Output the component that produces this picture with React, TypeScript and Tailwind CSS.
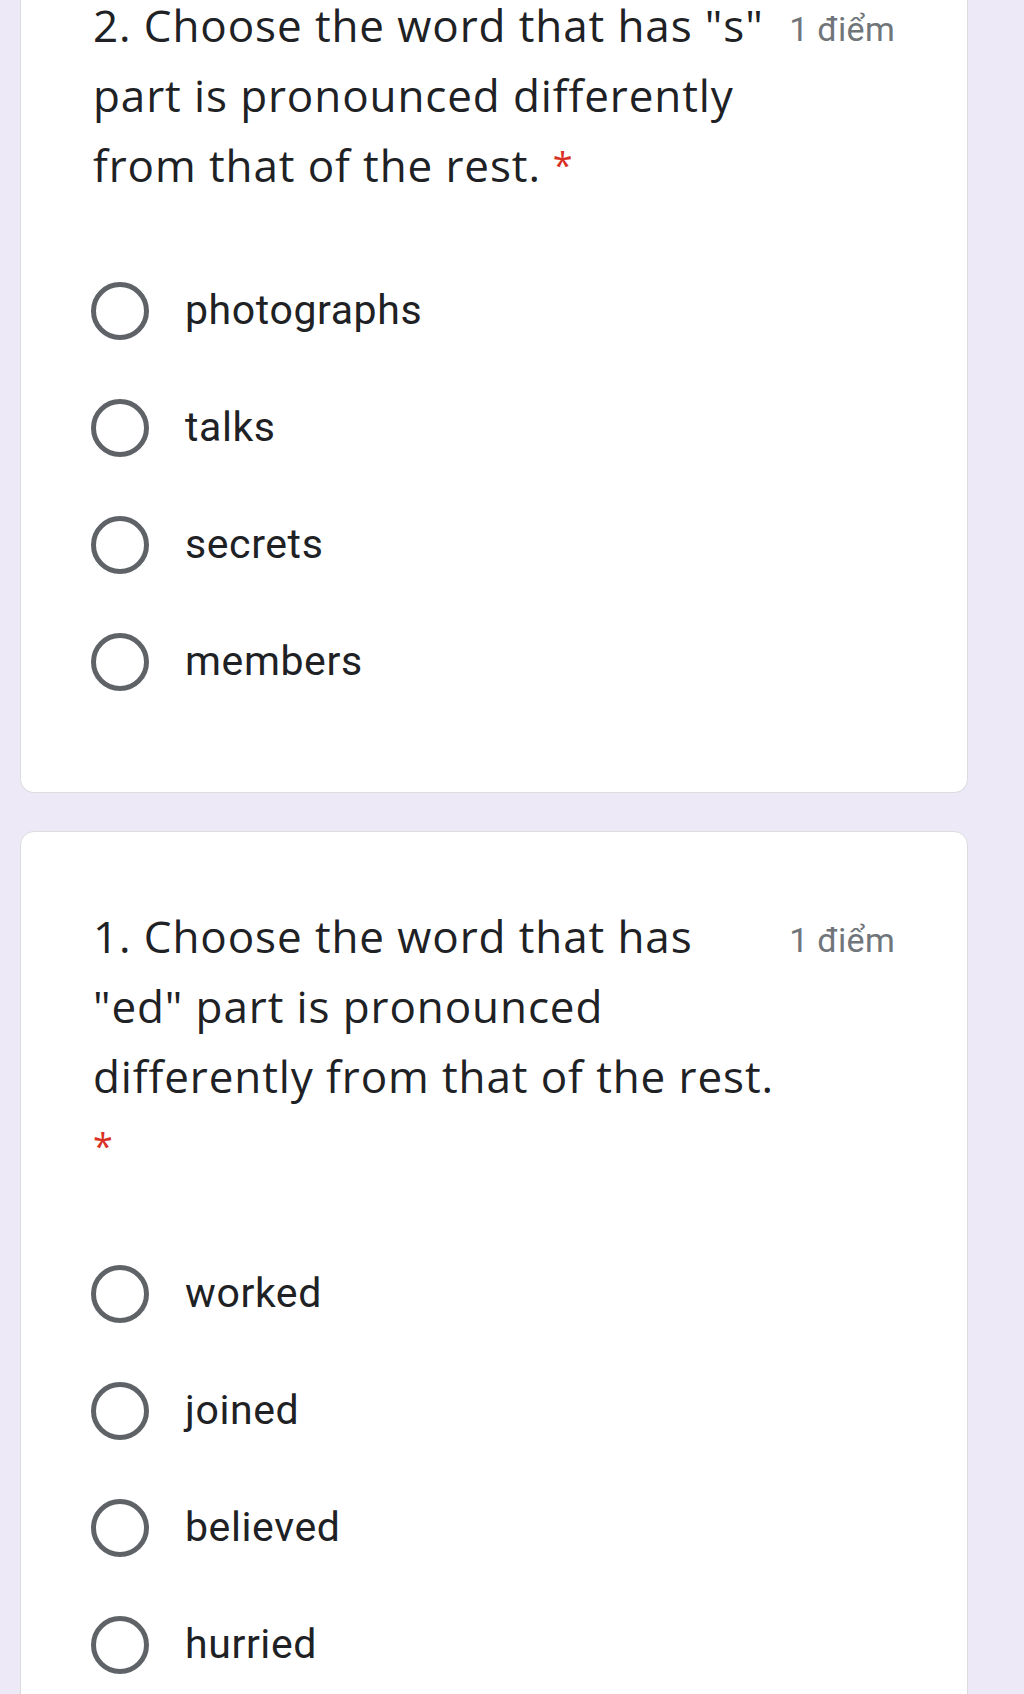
import React from "react";

type Question = {
  lines: string[];
  starInline: boolean;
  options: string[];
};

const questions: Question[] = [
  {
    lines: ['2. Choose the word that has "s"', "part is pronounced differently", "from that of the rest."],
    starInline: true,
    options: ["photographs", "talks", "secrets", "members"],
  },
  {
    lines: ["1. Choose the word that has", '"ed" part is pronounced', "differently from that of the rest."],
    starInline: false,
    options: ["worked", "joined", "believed", "hurried"],
  },
];

function Radio() {
  return <span className="block h-[58px] w-[58px] shrink-0 rounded-full border-[5px] border-[#5f6368]" />;
}

function QuestionCard({ q, className }: { q: Question; className?: string }) {
  const last = q.lines.length - 1;
  return (
    <div className={`rounded-[14px] border border-[#dadce0] bg-white px-[72px] pt-[69px] pb-[72px] ${className ?? ""}`}>
      <div className="flex items-start">
        <div className="flex-1 font-['Open_Sans',sans-serif] text-[44px] leading-[70px] tracking-[0.9px] text-[#202124]">
          {q.lines.map((line, i) => (
            <div key={i} className="h-[70px]">
              {line}
              {q.starInline && i === last && (
                <span className="relative -top-[4px] ml-[12px] text-[36px] leading-[0] text-[#d93025]">*</span>
              )}
            </div>
          ))}
          {!q.starInline && <div className="h-[72px] text-[36px] text-[#d93025]">*</div>}
        </div>
        <div className="mt-[22px] shrink-0 font-['Roboto',sans-serif] text-[34px] leading-none tracking-[0.3px] text-[#70757a]">
          1 điểm
        </div>
      </div>
      <div className="mt-[52px] flex flex-col">
        {q.options.map((opt) => (
          <label key={opt} className="-ml-[2px] flex h-[117px] items-center gap-[36px]">
            <Radio />
            <span className="font-['Roboto',sans-serif] text-[41px] tracking-[0.6px] text-[#202124]">{opt}</span>
          </label>
        ))}
      </div>
    </div>
  );
}

export default function App() {
  return (
    <div className="h-[1694px] overflow-hidden bg-[#ede9f7] pl-[20px] pr-[56px]">
      <QuestionCard q={questions[0]} className="-mt-[79px] rounded-t-none border-t-0" />
      <QuestionCard q={questions[1]} className="mt-[38px]" />
    </div>
  );
}
